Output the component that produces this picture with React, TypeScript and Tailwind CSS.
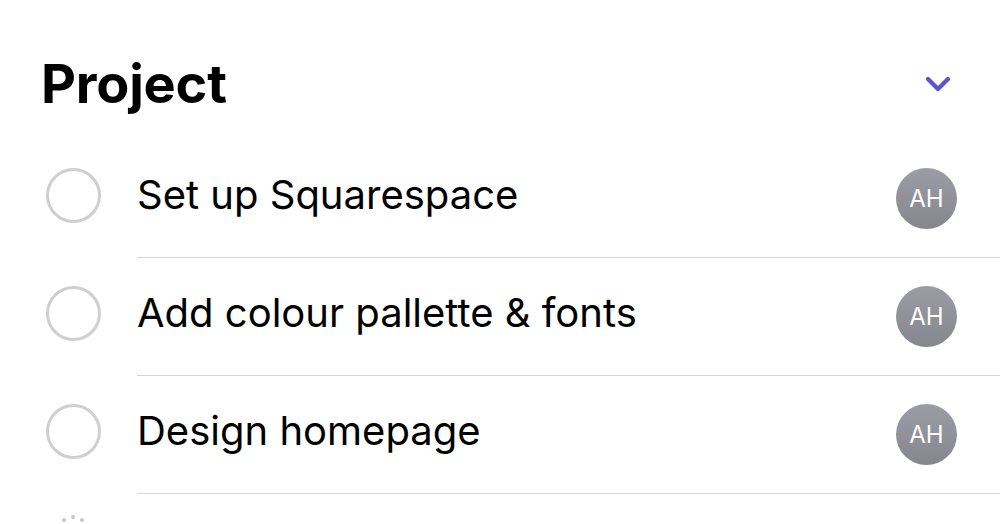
import { ChevronDown } from "lucide-react"

const tasks = ["Set up Squarespace", "Add colour pallette & fonts", "Design homepage"]

function TaskRow({ title }: { title: string }) {
  return (
    <div className="flex h-[118px]">
      <div className="w-[137px] shrink-0 flex items-center pl-[46px] pb-[7px]">
        <div className="w-[55px] h-[55px] rounded-full border-[3px] border-[#cfcfcf]" />
      </div>
      <div className="flex-1 flex items-center border-b border-[#d4d4d6] pr-[43px]">
        <span className="flex-1 text-[40px] text-black tracking-[0px] pb-[8px]">{title}</span>
        <div className="w-[61px] h-[61px] rounded-full bg-gradient-to-b from-[#9c9ca4] to-[#86868e] flex items-center justify-center text-white text-[24px]">
          AH
        </div>
      </div>
    </div>
  )
}

export default function App() {
  return (
    <div className="w-[1000px] h-[524px] overflow-hidden bg-white font-['Inter',sans-serif]">
      <div className="flex items-center justify-between pl-[41px] pr-[42px] pt-[50px] h-[140px] pb-[22px]">
        <h1 className="text-[54px] font-bold text-black tracking-[-0.2px] leading-none">Project</h1>
        <ChevronDown className="w-[40px] h-[40px] text-[#5b55d2]" strokeWidth={2.6} />
      </div>
      {tasks.map((t) => (
        <TaskRow key={t} title={t} />
      ))}
      <div className="flex pl-[62px] pt-[24px] gap-[5px]">
        <span className="w-[4px] h-[4px] rounded-full bg-[#c8c8c8]" />
        <span className="w-[4px] h-[4px] rounded-full bg-[#c8c8c8] -mt-[3px]" />
        <span className="w-[4px] h-[4px] rounded-full bg-[#c8c8c8]" />
      </div>
    </div>
  )
}
